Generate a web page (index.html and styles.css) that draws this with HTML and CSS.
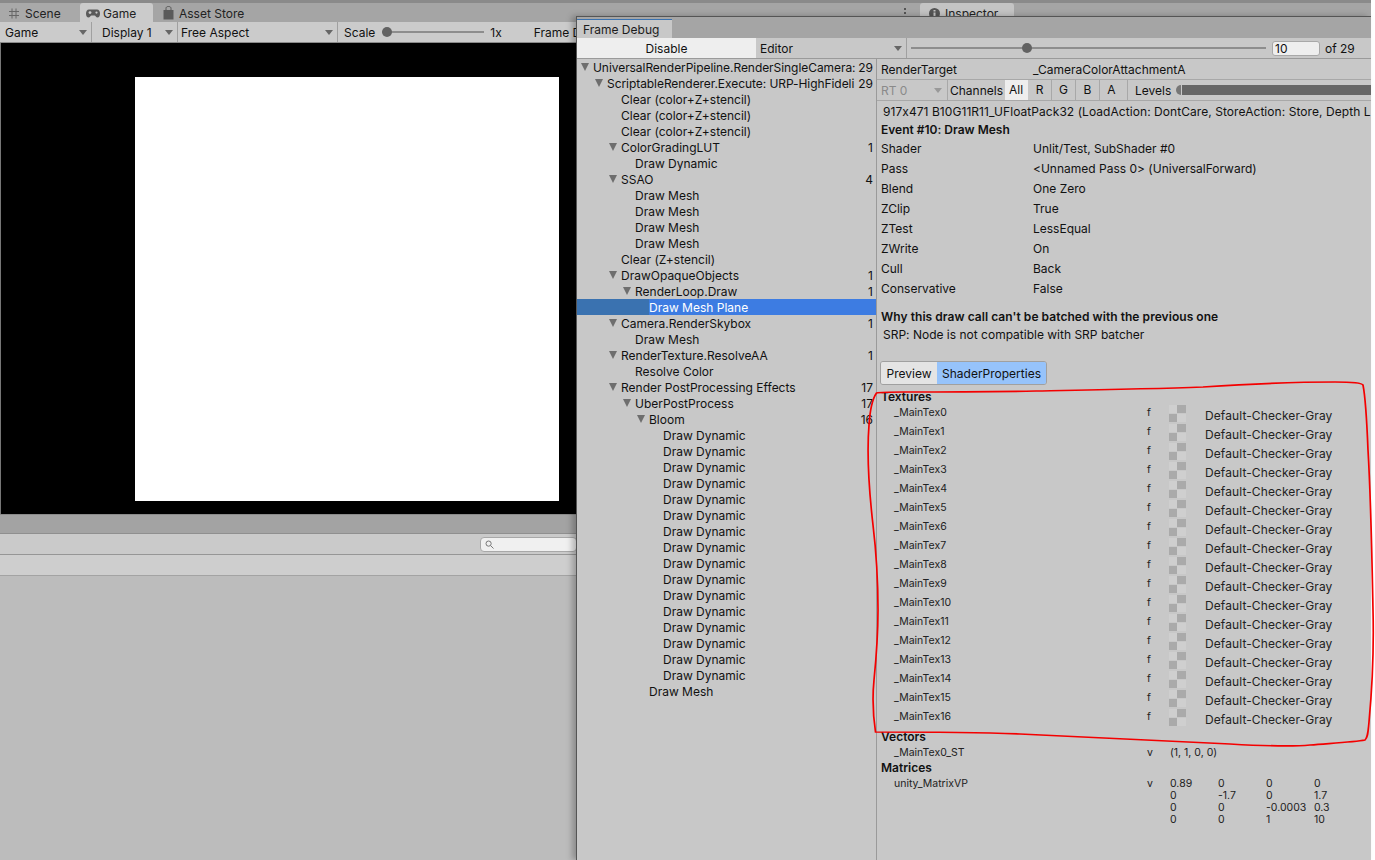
FILE: index.html
```html
<!DOCTYPE html>
<html>
<head>
<meta charset="UTF-8"><title>Frame Debug</title>
<link rel="stylesheet" href="styles.css">
</head>
<body>

<div class="editor">
  <div class="topstrip"></div>
  <div class="tabbar">
    <div class="tab tabScene">
      <svg class="icon" width="10" height="11" viewBox="0 0 10 11"><path d="M3 0.5V10.5M7 0.5V10.5M0 3.5H10M0 7.5H10" stroke="#666" fill="none"/></svg>
      <span>Scene</span>
    </div>
    <div class="tab tabGame">
      <svg class="icon" width="14" height="9" viewBox="0 0 14 9"><path d="M3 0.5H11C13 0.5 14 2.5 14 4.5C14 7 13 8.5 11.5 8.5C10 8.5 9.5 6.5 8.5 6.5H5.5C4.5 6.5 4 8.5 2.5 8.5C1 8.5 0 7 0 4.5C0 2.5 1 0.5 3 0.5Z" fill="#5a5a5a"/><circle cx="4" cy="3.6" r="1.4" fill="#cbcbcb"/><circle cx="10.5" cy="3.6" r="1.1" fill="#cbcbcb"/></svg>
      <span>Game</span>
    </div>
    <div class="tab tabStore">
      <svg class="icon" width="11" height="14" viewBox="0 0 11 14"><path d="M3 4V2.5C3 1 4 .5 5.5 .5C7 .5 8 1 8 2.5V4" stroke="#555" fill="none"/><path d="M0.5 4H10.5V13.5H0.5Z" fill="#5a5a5a"/></svg>
      <span>Asset Store</span>
    </div>
    <div class="tabSpacer"></div>
    <div class="dots"><i></i><i></i><i></i></div>
    <div class="tab tabInspector">
      <svg class="icon" width="11" height="11" viewBox="0 0 11 11"><circle cx="5.5" cy="5.5" r="5.5" fill="#555"/><path d="M4.5 2H6.5V3.6H4.5ZM4.5 4.6H6.5V9H4.5Z" fill="#c4c4c4"/></svg>
      <span>Inspector</span>
    </div>
  </div>

  <div class="gamebar">
    <div class="gamebarItem gbGame"><span>Game</span><b class="arrow"></b></div>
    <div class="gamebarItem gbDisplay"><span>Display 1</span><b class="arrow"></b></div>
    <div class="gamebarItem gbAspect"><span>Free Aspect</span><b class="arrow"></b></div>
    <div class="gamebarItem gbScale">
      <span>Scale</span>
      <div class="scaleSlider"><i class="thumb"></i></div>
      <span class="scaleVal">1x</span>
      <span class="frameLabel">Frame D</span>
    </div>
  </div>

  <div class="gameview"><div class="gameWhite"></div></div>

  <div class="lowerTabs"></div>
  <div class="lowerBar">
    <div class="search">
      <svg width="9" height="9" viewBox="0 0 9 9"><circle cx="3.6" cy="3.6" r="2.6" stroke="#777" fill="none"/><path d="M5.6 5.6L8.5 8.5" stroke="#777"/></svg>
    </div>
  </div>
  <div class="lowerHead"></div>
  <div class="lowerBody"></div>
</div>

<div class="frameDebug">
  <div class="fdTabs"><div class="fdTab">Frame Debug</div></div>
  <div class="fdBar">
    <div class="fdDisable">Disable</div>
    <div class="fdEditor"><span>Editor</span><b class="arrow"></b></div>
    <div class="fdSlider"><div class="fdTrack"><i class="thumb"></i></div></div>
    <div class="fdNum">10</div>
    <div class="fdOf">of 29</div>
  </div>

  <div class="fdMain">
    <div class="tree">
      <div class="row l0 tight"><b class="tri"></b><span class="name">UniversalRenderPipeline.RenderSingleCamera:</span><span class="cnt">29</span></div>
      <div class="row l1 tight"><b class="tri"></b><span class="name">ScriptableRenderer.Execute: URP-HighFideli</span><span class="cnt">29</span></div>
      <div class="row l2"><span class="name">Clear (color+Z+stencil)</span></div>
      <div class="row l2"><span class="name">Clear (color+Z+stencil)</span></div>
      <div class="row l2"><span class="name">Clear (color+Z+stencil)</span></div>
      <div class="row l2"><b class="tri"></b><span class="name">ColorGradingLUT</span><span class="cnt">1</span></div>
      <div class="row l3"><span class="name">Draw Dynamic</span></div>
      <div class="row l2"><b class="tri"></b><span class="name">SSAO</span><span class="cnt">4</span></div>
      <div class="row l3"><span class="name">Draw Mesh</span></div>
      <div class="row l3"><span class="name">Draw Mesh</span></div>
      <div class="row l3"><span class="name">Draw Mesh</span></div>
      <div class="row l3"><span class="name">Draw Mesh</span></div>
      <div class="row l2"><span class="name">Clear (Z+stencil)</span></div>
      <div class="row l2"><b class="tri"></b><span class="name">DrawOpaqueObjects</span><span class="cnt">1</span></div>
      <div class="row l3"><b class="tri"></b><span class="name">RenderLoop.Draw</span><span class="cnt">1</span></div>
      <div class="row l4 selected"><span class="name">Draw Mesh Plane</span></div>
      <div class="row l2"><b class="tri"></b><span class="name">Camera.RenderSkybox</span><span class="cnt">1</span></div>
      <div class="row l3"><span class="name">Draw Mesh</span></div>
      <div class="row l2"><b class="tri"></b><span class="name">RenderTexture.ResolveAA</span><span class="cnt">1</span></div>
      <div class="row l3"><span class="name">Resolve Color</span></div>
      <div class="row l2"><b class="tri"></b><span class="name">Render PostProcessing Effects</span><span class="cnt">17</span></div>
      <div class="row l3"><b class="tri"></b><span class="name">UberPostProcess</span><span class="cnt">17</span></div>
      <div class="row l4"><b class="tri"></b><span class="name">Bloom</span><span class="cnt">16</span></div>
      <div class="row l5"><span class="name">Draw Dynamic</span></div>
      <div class="row l5"><span class="name">Draw Dynamic</span></div>
      <div class="row l5"><span class="name">Draw Dynamic</span></div>
      <div class="row l5"><span class="name">Draw Dynamic</span></div>
      <div class="row l5"><span class="name">Draw Dynamic</span></div>
      <div class="row l5"><span class="name">Draw Dynamic</span></div>
      <div class="row l5"><span class="name">Draw Dynamic</span></div>
      <div class="row l5"><span class="name">Draw Dynamic</span></div>
      <div class="row l5"><span class="name">Draw Dynamic</span></div>
      <div class="row l5"><span class="name">Draw Dynamic</span></div>
      <div class="row l5"><span class="name">Draw Dynamic</span></div>
      <div class="row l5"><span class="name">Draw Dynamic</span></div>
      <div class="row l5"><span class="name">Draw Dynamic</span></div>
      <div class="row l5"><span class="name">Draw Dynamic</span></div>
      <div class="row l5"><span class="name">Draw Dynamic</span></div>
      <div class="row l5"><span class="name">Draw Dynamic</span></div>
      <div class="row l4"><span class="name">Draw Mesh</span></div>
    </div>

    <div class="details">
      <div class="targetRow"><span class="lbl">RenderTarget</span><span>_CameraColorAttachmentA</span></div>
      <div class="channelRow">
        <div class="rtSel"><span>RT 0</span><b class="arrow"></b></div>
        <div class="chLabel">Channels</div>
        <div class="chBtn on">All</div>
        <div class="chBtn">R</div>
        <div class="chBtn">G</div>
        <div class="chBtn">B</div>
        <div class="chBtn chLast">A</div>
        <div class="levels"><span>Levels</span><i class="lvlKnob"></i><i class="lvlBar"></i></div>
      </div>
      <div class="formatLine">917x471 B10G11R11_UFloatPack32 (LoadAction: DontCare, StoreAction: Store, Depth L</div>
      <div class="eventLine">Event #10: Draw Mesh</div>

      <div class="kv"><span class="lbl">Shader</span><span>Unlit/Test, SubShader #0</span></div>
      <div class="kv"><span class="lbl">Pass</span><span>&lt;Unnamed Pass 0&gt; (UniversalForward)</span></div>
      <div class="kv"><span class="lbl">Blend</span><span>One Zero</span></div>
      <div class="kv"><span class="lbl">ZClip</span><span>True</span></div>
      <div class="kv"><span class="lbl">ZTest</span><span>LessEqual</span></div>
      <div class="kv"><span class="lbl">ZWrite</span><span>On</span></div>
      <div class="kv"><span class="lbl">Cull</span><span>Back</span></div>
      <div class="kv"><span class="lbl">Conservative</span><span>False</span></div>

      <div class="whyTitle">Why this draw call can't be batched with the previous one</div>
      <div class="whyText">SRP: Node is not compatible with SRP batcher</div>

      <div class="segGroup">
        <div class="seg">Preview</div>
        <div class="seg segOn">ShaderProperties</div>
      </div>

      <div class="secTitle secTextures">Textures</div>
      <div class="tex"><span class="pName">_MainTex0</span><span class="pType">f</span><i class="checker"></i><span class="pVal">Default-Checker-Gray</span></div>
      <div class="tex"><span class="pName">_MainTex1</span><span class="pType">f</span><i class="checker"></i><span class="pVal">Default-Checker-Gray</span></div>
      <div class="tex"><span class="pName">_MainTex2</span><span class="pType">f</span><i class="checker"></i><span class="pVal">Default-Checker-Gray</span></div>
      <div class="tex"><span class="pName">_MainTex3</span><span class="pType">f</span><i class="checker"></i><span class="pVal">Default-Checker-Gray</span></div>
      <div class="tex"><span class="pName">_MainTex4</span><span class="pType">f</span><i class="checker"></i><span class="pVal">Default-Checker-Gray</span></div>
      <div class="tex"><span class="pName">_MainTex5</span><span class="pType">f</span><i class="checker"></i><span class="pVal">Default-Checker-Gray</span></div>
      <div class="tex"><span class="pName">_MainTex6</span><span class="pType">f</span><i class="checker"></i><span class="pVal">Default-Checker-Gray</span></div>
      <div class="tex"><span class="pName">_MainTex7</span><span class="pType">f</span><i class="checker"></i><span class="pVal">Default-Checker-Gray</span></div>
      <div class="tex"><span class="pName">_MainTex8</span><span class="pType">f</span><i class="checker"></i><span class="pVal">Default-Checker-Gray</span></div>
      <div class="tex"><span class="pName">_MainTex9</span><span class="pType">f</span><i class="checker"></i><span class="pVal">Default-Checker-Gray</span></div>
      <div class="tex"><span class="pName">_MainTex10</span><span class="pType">f</span><i class="checker"></i><span class="pVal">Default-Checker-Gray</span></div>
      <div class="tex"><span class="pName">_MainTex11</span><span class="pType">f</span><i class="checker"></i><span class="pVal">Default-Checker-Gray</span></div>
      <div class="tex"><span class="pName">_MainTex12</span><span class="pType">f</span><i class="checker"></i><span class="pVal">Default-Checker-Gray</span></div>
      <div class="tex"><span class="pName">_MainTex13</span><span class="pType">f</span><i class="checker"></i><span class="pVal">Default-Checker-Gray</span></div>
      <div class="tex"><span class="pName">_MainTex14</span><span class="pType">f</span><i class="checker"></i><span class="pVal">Default-Checker-Gray</span></div>
      <div class="tex"><span class="pName">_MainTex15</span><span class="pType">f</span><i class="checker"></i><span class="pVal">Default-Checker-Gray</span></div>
      <div class="tex"><span class="pName">_MainTex16</span><span class="pType">f</span><i class="checker"></i><span class="pVal">Default-Checker-Gray</span></div>

      <div class="secTitle secVectors">Vectors</div>
      <div class="vec"><span class="pName">_MainTex0_ST</span><span class="pType">v</span><span class="vecVal">(1, 1, 0, 0)</span></div>

      <div class="secTitle secMatrices">Matrices</div>
      <div class="mat">
        <span class="pName">unity_MatrixVP</span><span class="pType">v</span>
        <div class="matGrid">
          <span>0.89</span><span>0</span><span>0</span><span>0</span>
          <span>0</span><span>-1.7</span><span>0</span><span>1.7</span>
          <span>0</span><span>0</span><span>-0.0003</span><span>0.3</span>
          <span>0</span><span>0</span><span>1</span><span>10</span>
        </div>
      </div>
    </div>
  </div>
</div>

<svg class="scribble" width="1375" height="860" viewBox="0 0 1375 860">
  <path d="M876.5 393C873 398 870 410 869 425C867 450 869 490 873 525C876 550 878 580 878 610C878 635 876 660 874 680C872 700 873 715 875.5 732C920 732 970 732 1020 734C1090 737 1160 741 1230 744C1265 746 1290 747 1310 745C1335 743 1355 742 1365 740C1368 737 1368 732 1369 722C1372 690 1374 650 1373 610C1372 560 1371 500 1368 450C1367 425 1366 400 1363 385C1362 383 1352 382 1335 382C1300 382 1250 384 1203 387C1150 389 1090 390 1036 391C980 392 940 392 903 392C890 392 881 392 876.5 393Z" fill="none" stroke="#f40000" stroke-width="1.7"/>
</svg>

</body>
</html>
```

FILE: styles.css
```css
html, body {
    margin: 0;
    padding: 0;
    width: 1375px;
    height: 860px;
    overflow: hidden;
    background: #fff;
}

body {
    position: relative;
    font-family: Inter, "Noto Sans", sans-serif;
    font-size: 12px;
    font-feature-settings: "calt" 0;
    color: #111;
}

.arrow {
    display: block;
    width: 0;
    height: 0;
    border-left: 4px solid transparent;
    border-right: 4px solid transparent;
    border-top: 5px solid #666;
}

.thumb {
    display: block;
    flex: none;
    width: 10px;
    height: 10px;
    border-radius: 50%;
    background: #626262;
}

/* main editor behind the floating window */
.editor {
    display: flex;
    flex-direction: column;
    width: 1371px;
    height: 860px;
    background: #bcbcbc;
}

.topstrip {
    height: 3px;
    background: #8a8a8a;
}

.tabbar {
    display: flex;
    align-items: flex-end;
    height: 19px;
    background: #a5a5a5;
    color: #222;
}

.tab {
    display: flex;
    align-items: center;
    height: 19px;
    padding-top: 1px;
    box-sizing: border-box;
    white-space: nowrap;
}

.tabScene { width: 80px; padding-left: 9px; gap: 6px; background: #a9a9a9; }
.tabGame { width: 73px; padding-left: 6px; gap: 3px; background: #cbcbcb; border-radius: 3px 3px 0 0; }
.tabStore { width: 140px; padding-left: 10px; gap: 5px; }
.tabSpacer { width: 610px; }
.tabInspector { width: 94px; padding-left: 9px; gap: 5px; background: #c4c4c4; border-radius: 3px 3px 0 0; }

.dots {
    display: flex;
    flex-direction: column;
    gap: 2px;
    width: 17px;
    padding: 0 0 4px 1px;
    box-sizing: border-box;
}

.dots i {
    width: 2px;
    height: 2px;
    background: #555;
}

.gamebar {
    display: flex;
    height: 20px;
    background: #cbcbcb;
    border-bottom: 1px solid #8a8a8a;
}

.gamebarItem {
    display: flex;
    align-items: center;
    box-sizing: border-box;
    border-right: 1px solid #a0a0a0;
    white-space: nowrap;
}

.gbGame { width: 92px; padding: 0 4px 0 5px; justify-content: space-between; }
.gbDisplay { width: 86px; padding: 0 4px 0 10px; justify-content: space-between; }
.gbAspect { width: 160px; padding: 0 4px 0 3px; justify-content: space-between; }
.gbScale { flex: 1; padding-left: 6px; border-right: 0; overflow: hidden; }

.scaleSlider {
    display: flex;
    align-items: center;
    width: 102px;
    height: 2px;
    margin-left: 7px;
    background: #8d8d8d;
}

.scaleVal { margin-left: 6px; }
.frameLabel { margin-left: 32px; }

.gameview {
    display: flex;
    flex-direction: column;
    height: 471px;
    padding: 34px 0 0 135px;
    box-sizing: border-box;
    background: #000;
    border-left: 1px solid #777;
}

.gameWhite {
    width: 424px;
    height: 424px;
    margin-left: -1px;
    background: #fff;
}

.lowerTabs {
    height: 20px;
    box-sizing: border-box;
    background: #a3a3a3;
    border-top: 1px solid #8a8a8a;
    border-bottom: 1px solid #8f8f8f;
}

.lowerBar {
    display: flex;
    align-items: center;
    height: 20px;
    padding-left: 480px;
    background: #cacaca;
    border-bottom: 1px solid #969696;
}

.search {
    display: flex;
    align-items: center;
    width: 97px;
    height: 15px;
    padding-left: 4px;
    box-sizing: border-box;
    background: #f0f0f0;
    border: 1px solid #a8a8a8;
    border-radius: 4px;
}

.lowerHead {
    height: 20px;
    background: #cecece;
    border-bottom: 1px solid #a3a3a3;
}

.lowerBody {
    flex: 1;
    background: #bcbcbc;
}

/* floating frame debugger window */
.frameDebug {
    position: absolute;
    left: 576px;
    top: 16px;
    display: flex;
    flex-direction: column;
    width: 795px;
    height: 844px;
    box-sizing: border-box;
    background: #c8c8c8;
    border-left: 1px solid #555;
    border-top: 1px solid #555;
    box-shadow: -4px 0 6px rgba(0, 0, 0, 0.25);
}

.fdTabs {
    display: flex;
    align-items: flex-end;
    height: 21px;
    background: #a5a5a5;
}

.fdTab {
    display: flex;
    align-items: center;
    width: 95px;
    height: 19px;
    padding: 0 0 0 6px;
    box-sizing: border-box;
    background: #c8c8c8;
    border-top: 1px solid #3a72b0;
    color: #1c1c1c;
}

.fdBar {
    display: flex;
    align-items: center;
    height: 20px;
    background: #c8c8c8;
    border-bottom: 1px solid #9a9a9a;
}

.fdDisable {
    display: flex;
    align-items: center;
    justify-content: center;
    width: 179px;
    height: 20px;
    background: #eeeeee;
}

.fdEditor {
    display: flex;
    align-items: center;
    justify-content: space-between;
    width: 151px;
    height: 20px;
    padding: 0 4px 0 4px;
    box-sizing: border-box;
    border-right: 1px solid #a0a0a0;
}

.fdSlider {
    display: flex;
    align-items: center;
    width: 359px;
    padding-left: 4px;
    box-sizing: border-box;
}

.fdTrack {
    display: flex;
    align-items: center;
    width: 355px;
    height: 2px;
    background: #8d8d8d;
}

.fdTrack .thumb {
    margin-left: 111px;
}

.fdNum {
    width: 48px;
    height: 15px;
    line-height: 13px;
    margin-left: 6px;
    padding-left: 2px;
    box-sizing: border-box;
    background: #eeeeee;
    border: 1px solid #a8a8a8;
    border-radius: 3px;
}

.fdOf {
    margin-left: 5px;
    white-space: nowrap;
}

.fdMain {
    display: flex;
    flex: 1;
    min-height: 0;
}

.tree {
    width: 300px;
    box-sizing: border-box;
    flex: none;
    border-right: 1px solid #9a9a9a;
}

.row {
    display: flex;
    align-items: center;
    height: 16px;
    white-space: nowrap;
    overflow: hidden;
    padding-right: 3px;
}

.row .name { flex: 1; overflow: hidden; }
.row .cnt { flex: none; }
.tight .name { letter-spacing: -0.06px; }

.tri {
    display: block;
    flex: none;
    width: 0;
    height: 0;
    margin-right: 4px;
    border-left: 4px solid transparent;
    border-right: 4px solid transparent;
    border-top: 8px solid #6e6e6e;
}

.l0 { padding-left: 4px; }
.l1 { padding-left: 18px; }
.l2 { padding-left: 44px; }
.l3 { padding-left: 58px; }
.l4 { padding-left: 72px; }
.l5 { padding-left: 86px; }
.l2:has(.tri) { padding-left: 32px; }
.l3:has(.tri) { padding-left: 46px; }
.l4:has(.tri) { padding-left: 60px; }

.selected {
    background: linear-gradient(to right, #3a72b0 72px, #3d7ce2 72px);
    color: #fff;
}

.details {
    flex: 1;
    min-width: 0;
    overflow: hidden;
    white-space: nowrap;
    background: #c8c8c8;
}

.lbl {
    display: inline-block;
    width: 152px;
}

.targetRow {
    display: flex;
    align-items: center;
    height: 21px;
    padding: 1px 0 0 4px;
    box-sizing: border-box;
    border-bottom: 1px solid #a8a8a8;
}

.channelRow {
    display: flex;
    align-items: center;
    height: 21px;
    box-sizing: border-box;
    border-bottom: 1px solid #a8a8a8;
}

.rtSel {
    display: flex;
    align-items: center;
    justify-content: space-between;
    width: 71px;
    height: 20px;
    padding: 0 5px 0 4px;
    box-sizing: border-box;
    color: #8a8a8a;
    border-right: 1px solid #a8a8a8;
}

.rtSel .arrow { border-top-color: #999; }

.chLabel {
    width: 57px;
    padding-left: 2px;
    box-sizing: border-box;
}

.chBtn {
    width: 24px;
    height: 20px;
    line-height: 20px;
    text-align: center;
    box-sizing: border-box;
    border-right: 1px solid #a8a8a8;
}

.chBtn.on {
    width: 23px;
    background: #eeeeee;
    border-right-color: #eeeeee;
}

.chLast { width: 28px; padding-right: 4px; }

.levels {
    display: flex;
    align-items: center;
    flex: 1;
    padding-left: 7px;
}

.lvlKnob {
    width: 5px;
    height: 10px;
    margin-left: 5px;
    background: #777;
    border-radius: 5px 0 0 5px;
}

.lvlBar {
    flex: 1;
    height: 10px;
    margin-left: 1px;
    background: #666;
}

.formatLine {
    height: 20px;
    line-height: 21px;
    padding-left: 6px;
    letter-spacing: 0.06px;
}

.eventLine {
    height: 17px;
    line-height: 18px;
    padding-left: 4px;
    font-weight: 600;
}

.kv {
    display: flex;
    align-items: center;
    height: 20px;
    padding-left: 4px;
}

.whyTitle {
    height: 18px;
    line-height: 18px;
    margin-top: 10px;
    padding-left: 4px;
    font-weight: 600;
    letter-spacing: 0.05px;
}

.whyText {
    height: 18px;
    line-height: 18px;
    padding-left: 6px;
}

.segGroup {
    display: flex;
    width: fit-content;
    height: 24px;
    margin: 17px 0 0 3px;
    box-sizing: border-box;
    border: 1px solid #a0a0a0;
    border-radius: 3px;
    overflow: hidden;
}

.seg {
    display: flex;
    align-items: center;
    justify-content: center;
    width: 56px;
    background: #e4e4e4;
}

.segOn {
    width: 109px;
    background: #96c3fb;
}

.secTitle {
    height: 14px;
    line-height: 14px;
    padding-left: 4px;
    font-weight: 600;
}

.secTextures { margin: 5px 0 1px; }
.secVectors { margin-top: 2px; }

.tex, .vec, .mat {
    display: flex;
    padding-left: 17px;
}

.tex {
    align-items: flex-start;
    height: 19px;
}

.pName {
    width: 253px;
    font-size: 10.5px;
    line-height: 15px;
    color: #222;
}

.pType {
    width: 22px;
    font-size: 10.5px;
    line-height: 15px;
    color: #222;
}

.checker {
    display: block;
    width: 17px;
    height: 17px;
    flex: none;
    background:
        linear-gradient(#aaa, #aaa) 8px 0 / 9px 8px no-repeat,
        linear-gradient(#aaa, #aaa) 0 9px / 8px 8px no-repeat,
        linear-gradient(#cfcfcf, #cfcfcf) 0 0 / 8px 8px no-repeat,
        linear-gradient(#cfcfcf, #cfcfcf) 8px 9px / 9px 8px no-repeat;
}

.pVal {
    margin-left: 19px;
    line-height: 21px;
    letter-spacing: 0.1px;
    color: #222;
}

.vec {
    height: 17px;
    align-items: center;
}

.vecVal {
    margin-left: 1px;
    font-size: 10.5px;
    color: #222;
}

.mat {
    margin-top: 1px;
    align-items: flex-start;
}

.matGrid {
    display: grid;
    grid-template-columns: 48px 48px 48px 40px;
    grid-auto-rows: 12px;
    font-size: 10.5px;
    line-height: 12px;
    margin: 2px 0 0 1px;
    color: #222;
}

.scribble {
    position: absolute;
    left: 0;
    top: 0;
    pointer-events: none;
}
```
